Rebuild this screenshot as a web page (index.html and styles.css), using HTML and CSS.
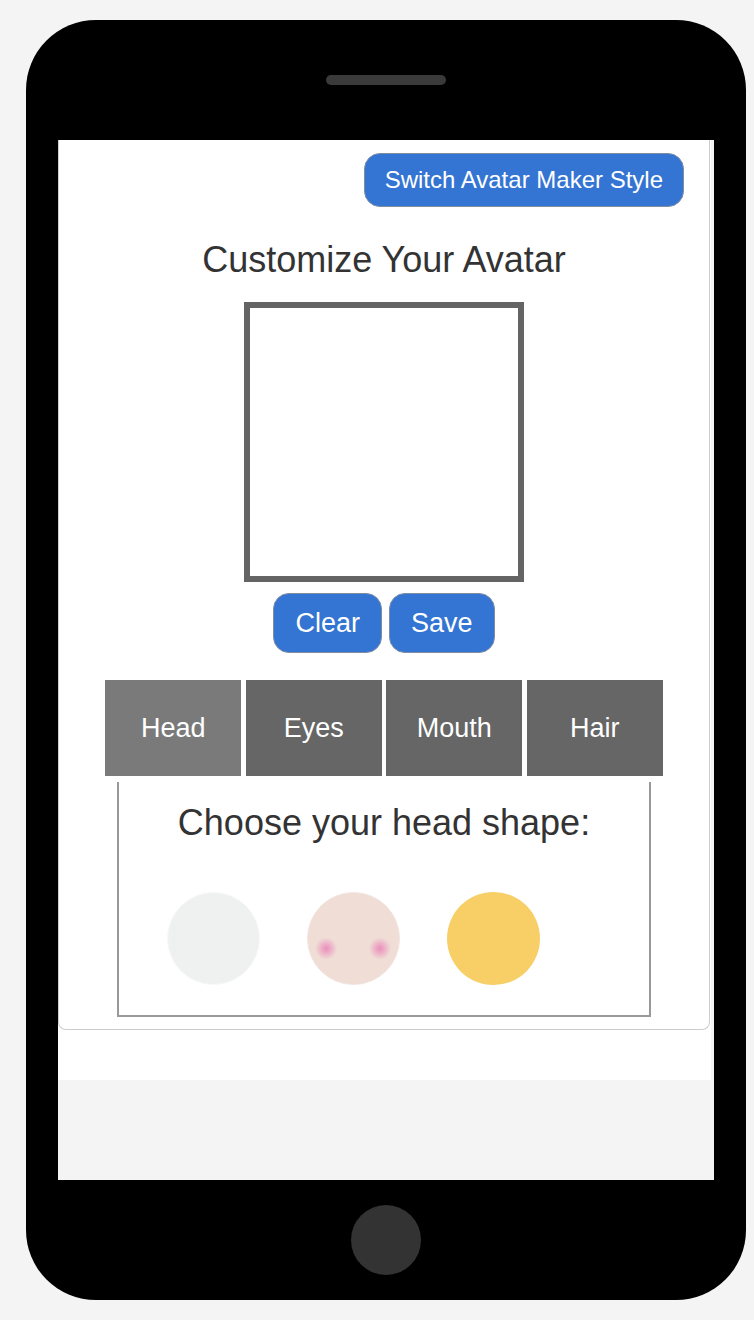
FILE: index.html
```html
<!DOCTYPE html>
<html lang="en">
<head>
  <meta charset="UTF-8">
  <meta name="viewport" content="width=device-width, initial-scale=1.0">
  <title>Avatar Maker</title>
  <link rel="stylesheet" href="styles.css">
</head>
<body>

<div class="phone">
  <div class="speaker"></div>

  <div class="screen">
    <div class="page">
      <div class="card">
        <div class="top-bar">
          <button class="btn switch-btn">Switch Avatar Maker Style</button>
        </div>

        <h2>Customize Your Avatar</h2>

        <div class="canvas-box">
          <canvas id="avatarCanvas" width="268" height="268"></canvas>
        </div>

        <div class="actions">
          <button class="btn">Clear</button>
          <button class="btn">Save</button>
        </div>

        <div class="tabs">
          <button class="tab active">Head</button>
          <button class="tab">Eyes</button>
          <button class="tab">Mouth</button>
          <button class="tab">Hair</button>
        </div>

        <div class="panel">
          <h3>Choose your head shape:</h3>
          <div class="options">
            <div class="head-option pale"></div>
            <div class="head-option blush"></div>
            <div class="head-option yellow"></div>
          </div>
        </div>
      </div>
    </div>
  </div>

  <div class="home-button"></div>
</div>

</body>
</html>
```

FILE: styles.css
```css
body {
  margin: 0;
  padding: 20px 0 0 26px;
  background: #f4f4f4;
  font-family: "Liberation Sans", Arial, sans-serif;
}

.phone {
  width: 720px;
  height: 1280px;
  background: #000;
  border-radius: 70px;
  display: flex;
  flex-direction: column;
  align-items: center;
  box-sizing: border-box;
}

.speaker {
  width: 120px;
  height: 10px;
  margin: 55px 0;
  background: #3a3a3a;
  border-radius: 5px;
}

.screen {
  width: 656px;
  height: 1040px;
  background: #f4f4f4;
  overflow: hidden;
}

.home-button {
  width: 70px;
  height: 70px;
  margin-top: 25px;
  background: #333;
  border-radius: 50%;
}

.page {
  width: 653px;
  height: 940px;
  background: #fff;
}

.card {
  width: 652px;
  padding: 13px 0 12px;
  border: 1px solid #ccc;
  border-top: none;
  border-radius: 0 0 8px 8px;
  box-sizing: border-box;
  display: flex;
  flex-direction: column;
  align-items: center;
}

.top-bar {
  align-self: stretch;
  display: flex;
  justify-content: flex-end;
  padding-right: 25px;
}

.btn {
  background: #3474d3;
  color: #fff;
  border: 1px solid #7f8da3;
  border-radius: 16px;
  font-family: inherit;
  font-size: 27px;
  height: 60px;
  padding: 0 21px;
  cursor: pointer;
}

.switch-btn {
  font-size: 24px;
  height: 54px;
  padding: 0 20px;
}

h2 {
  margin: 32px 0 21px;
  font-size: 36px;
  line-height: 42px;
  font-weight: normal;
  color: #333;
}

.canvas-box {
  border: 6px solid #646464;
}

.canvas-box canvas {
  display: block;
  background: #fff;
}

.actions {
  display: flex;
  gap: 7px;
  margin-top: 11px;
}

.tabs {
  display: flex;
  gap: 4.5px;
  margin-top: 27px;
}

.tab {
  width: 136px;
  height: 96px;
  border: none;
  background: #666;
  color: #fff;
  font-family: inherit;
  font-size: 27px;
  cursor: pointer;
}

.tab.active {
  background: #7a7a7a;
}

.panel {
  width: 534px;
  margin-top: 6px;
  padding: 20px 48px 30px;
  border: 2px solid #999;
  border-top: none;
  box-sizing: border-box;
}

h3 {
  margin: 0;
  font-size: 36px;
  line-height: 42px;
  font-weight: normal;
  color: #333;
  text-align: center;
}

.options {
  display: flex;
  gap: 47px;
  margin-top: 48px;
}

.head-option {
  width: 93px;
  height: 93px;
  border-radius: 50%;
  box-sizing: border-box;
  cursor: pointer;
}

.head-option.pale {
  background: #eff1f0;
  border: 1px solid #f8f8f8;
}

.head-option.blush {
  background:
    radial-gradient(circle at 20% 61%, #ea8fbb 0, rgba(236, 147, 189, 0.7) 4px, rgba(239, 221, 214, 0) 11px),
    radial-gradient(circle at 79% 61%, #ea8fbb 0, rgba(236, 147, 189, 0.7) 4px, rgba(239, 221, 214, 0) 11px),
    #efddd6;
  border: 1px solid #f3e6e1;
}

.head-option.yellow {
  background: #f7cf66;
}
```
